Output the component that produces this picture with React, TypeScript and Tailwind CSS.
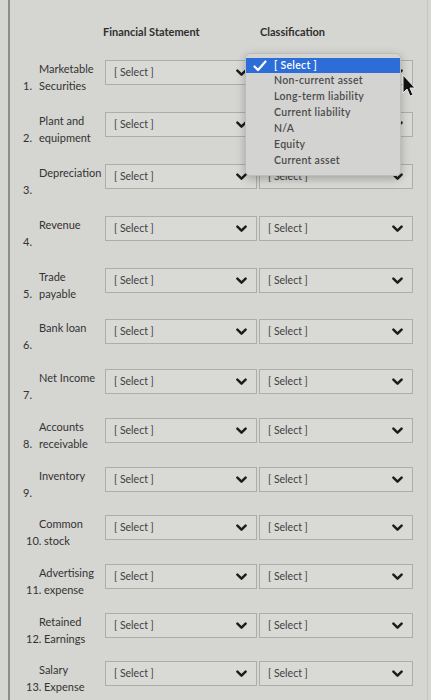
import React from 'react';

type Row = { n: string; top: string; bottom: string; h: string };

const rows: Row[] = [
    { n: '1.', top: 'Marketable', bottom: 'Securities', h: 'h-[52px]' },
    { n: '2.', top: 'Plant and', bottom: 'equipment', h: 'h-[52px]' },
    { n: '3.', top: 'Depreciation', bottom: '', h: 'h-[52px]' },
    { n: '4.', top: 'Revenue', bottom: '', h: 'h-[52px]' },
    { n: '5.', top: 'Trade', bottom: 'payable', h: 'h-[51px]' },
    { n: '6.', top: 'Bank loan', bottom: '', h: 'h-[50px]' },
    { n: '7.', top: 'Net Income', bottom: '', h: 'h-[49px]' },
    { n: '8.', top: 'Accounts', bottom: 'receivable', h: 'h-[49px]' },
    { n: '9.', top: 'Inventory', bottom: '', h: 'h-[48px]' },
    { n: '10.', top: 'Common', bottom: 'stock', h: 'h-[49px]' },
    { n: '11.', top: 'Advertising', bottom: 'expense', h: 'h-[49px]' },
    { n: '12.', top: 'Retained', bottom: 'Earnings', h: 'h-[48px]' },
    { n: '13.', top: 'Salary', bottom: 'Expense', h: 'h-[48px]' },
];

const options = [
    'Non-current asset',
    'Long-term liability',
    'Current liability',
    'N/A',
    'Equity',
    'Current asset',
];

function Chevron() {
    return (
        <svg width="11" height="8" viewBox="0 0 11 8" className="shrink-0">
            <path
                d="M1.4 1.6 L5.5 5.6 L9.6 1.6"
                fill="none"
                stroke="#1c1c1c"
                strokeWidth="2.5"
                strokeLinecap="round"
                strokeLinejoin="round"
            />
        </svg>
    );
}

function FakeSelect({ width }: { width: string }) {
    return (
        <div
            className={`${width} h-[25px] flex items-center justify-between pl-[8px] pr-[9px] border border-[#adadaa] bg-[#d9d9d6]`}
        >
            <span className="text-[10.5px] text-[#404040]">[ Select ]</span>
            <Chevron />
        </div>
    );
}

function Dropdown() {
    return (
        <div className="absolute left-[245px] top-[53px] w-[156px] h-[123px] rounded-[5px] bg-[#d3d3d1] border border-[#bdbdbb] shadow-[0_3px_10px_rgba(0,0,0,0.25)] pt-[4px]">
            <div className="h-[15px] bg-[#2c6dd8] flex items-center">
                <svg width="14" height="12" viewBox="0 0 14 12" className="ml-[7px]">
                    <path
                        d="M1.5 6.5 L5 10 L12.5 1.5"
                        fill="none"
                        stroke="#ffffff"
                        strokeWidth="2.2"
                        strokeLinecap="round"
                        strokeLinejoin="round"
                    />
                </svg>
                <span className="ml-[7px] text-[10.5px] font-semibold text-white tracking-[0.3px]">[ Select ]</span>
            </div>
            {options.map((o) => (
                <div
                    key={o}
                    className="h-[16px] pl-[28px] flex items-center text-[10.5px] font-semibold text-[#4b4b4b] tracking-[0.3px]"
                >
                    {o}
                </div>
            ))}
        </div>
    );
}

function Cursor() {
    return (
        <svg width="14" height="24" viewBox="0 0 14 24" className="absolute left-[402px] top-[74px]">
            <path
                d="M1 1 L1 19 L5 15 L8 22 L11 21 L8 14 L13 14 Z"
                fill="#111"
                stroke="#e8e8e8"
                strokeWidth="1"
                strokeLinejoin="round"
            />
        </svg>
    );
}

export default function App() {
    return (
        <div className="relative w-[431px] h-[700px] overflow-hidden bg-[#d5d5d2] font-['Lato','Liberation_Sans',sans-serif]">
            <div className="ml-[8px] mr-[3px] h-full border-l-2 border-r border-l-[#8c8c8a] border-r-[#c4c4c1] pt-[24px]">
                <div className="flex h-[36px] text-[11px] font-bold text-[#2f2f2f]">
                    <div className="w-[93px]" />
                    <div className="w-[155px]">Financial Statement</div>
                    <div className="ml-[2px]">Classification</div>
                </div>
                {rows.map((r) => (
                    <div key={r.n} className={`flex items-start ${r.h}`}>
                        <div className="w-[95px] text-[11px] leading-[17px] text-[#333]">
                            <div className="pl-[29px] whitespace-nowrap">{r.top}</div>
                            <div className="flex whitespace-nowrap">
                                {r.n.length > 2 ? (
                                    <span className="pl-[16px] w-[34px] shrink-0">{r.n}</span>
                                ) : (
                                    <span className="pl-[13px] w-[29px] shrink-0">{r.n}</span>
                                )}
                                <span>{r.bottom}</span>
                            </div>
                        </div>
                        <FakeSelect width="w-[152px]" />
                        <div className="w-[2px]" />
                        <FakeSelect width="w-[154px]" />
                    </div>
                ))}
            </div>
            <Dropdown />
            <Cursor />
        </div>
    );
}
